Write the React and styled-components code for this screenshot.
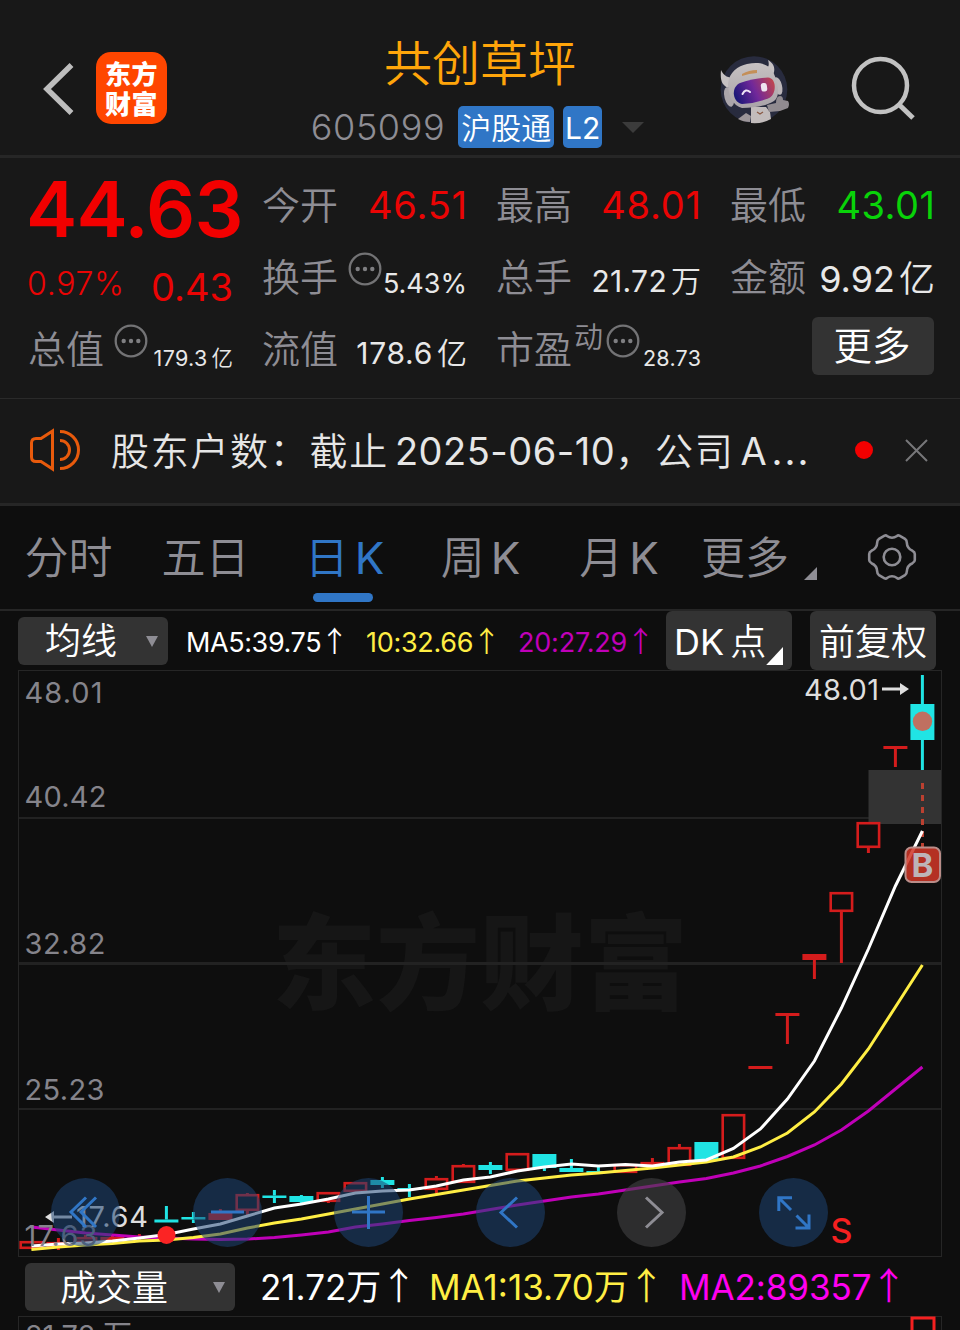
import styled, { createGlobalStyle } from "styled-components";

const GlobalStyle = createGlobalStyle`
  * {
    box-sizing: border-box;
  }
  body {
    margin: 0;
    background: #0e0e0e;
    font-family: Inter, "Noto Sans CJK SC", sans-serif;
    font-weight: 350;
    line-height: 1;
    color: #e6e6e6;
  }
`;

const Screen = styled.div`
  width: 960px;
  height: 1330px;
  overflow: hidden;
  display: flex;
  flex-direction: column;
  white-space: nowrap;
`;

/* header */

const Header = styled.header`
  display: grid;
  grid-template-columns: 300px 360px 300px;
  height: 158px;
  flex: none;
  background: #181818;
  border-bottom: 3px solid #262626;
`;

const HeaderLeft = styled.div`
  display: flex;
  align-items: flex-start;
  padding: 52px 0 0 42px;
  gap: 22px;
`;

const AppLogo = styled.div`
  display: grid;
  grid-template-columns: 26.5px 26.5px;
  grid-auto-rows: 30px;
  place-content: center;
  width: 71px;
  height: 72px;
  border-radius: 15px;
  background: #ff4600;
  color: #fff;
  font-size: 26px;
  font-weight: 900;
  line-height: 33px;
`;

const HeaderCenter = styled.div`
  display: flex;
  flex-direction: column;
  align-items: center;
`;

const StockName = styled.h1`
  margin: 36px 0 0;
  height: 70px;
  font-size: 48px;
  font-weight: 350;
  line-height: 56px;
  color: #ffa50a;
`;

const CodeRow = styled.div`
  display: flex;
  align-items: center;
  height: 42px;
  padding-right: 5px;
  gap: 9px;
`;

const Code = styled.span`
  margin-right: 4px;
  font-size: 36px;
  letter-spacing: 0.6px;
  color: #8e8d94;
`;

const Badge = styled.span`
  display: flex;
  align-items: center;
  justify-content: center;
  width: ${(p) => p.$width}px;
  height: 42px;
  padding-top: 1px;
  border-radius: 5px;
  background: #3076c6;
  color: #fff;
  font-size: 30px;
  font-weight: ${(p) => p.$weight || 350};
`;

const Caret = styled.span`
  width: 0;
  height: 0;
  margin-left: ${(p) => p.$gap || 0}px;
  border: solid transparent;
  border-width: ${(p) => p.$h}px ${(p) => p.$w / 2}px 0;
  border-top-color: ${(p) => p.$color};
`;

const HeaderRight = styled.div`
  display: flex;
  align-items: flex-start;
  padding: 52px 0 0 58px;
  gap: 58px;
`;

/* quote */

const Quote = styled.section`
  display: grid;
  grid-template-columns: repeat(4, 205px);
  grid-template-rows: repeat(3, 72px);
  column-gap: 29px;
  height: 241px;
  flex: none;
  padding: 10px 0 0 28px;
  background: #181818;
  border-bottom: 1px solid #2a2a2a;
`;

const Cell = styled.div`
  display: flex;
  align-items: center;
  height: 72px;
`;

const Price = styled.strong`
  margin-left: -2px;
  padding-top: 11px;
  font-size: 77px;
  font-weight: 600;
  letter-spacing: -0.8px;
  color: #f20000;
`;

const Label = styled.span`
  padding-top: 2px;
  font-size: 38px;
  color: #8e8d94;
`;

const tones = { up: "#ea0404", down: "#09d309", flat: "#e8e8e8" };

const Value = styled.span`
  display: flex;
  margin-left: ${(p) => (p.$lead ? "-1px" : "auto")};
  margin-right: ${(p) => -(p.$track || 0)}px;
  padding-top: ${(p) => p.$drop || 0}px;
  font-size: ${(p) => p.$size}px;
  font-weight: ${(p) => p.$weight || 400};
  letter-spacing: ${(p) => p.$track || 0}px;
  color: ${(p) => tones[p.$tone || "flat"]};
`;

const Unit = styled.span`
  margin-left: 4px;
  font-weight: 350;
`;

const Dynamic = styled.sup`
  align-self: flex-start;
  padding-top: 8px;
  margin: 0 3px 0 2px;
  font-size: 29px;
  line-height: 36px;
  color: #8e8d94;
`;

const MoreButton = styled.button`
  width: 122px;
  height: 58px;
  margin: -4px 1px 0 auto;
  padding: 0 2px 0 0;
  border: 0;
  border-radius: 6px;
  background: #333;
  color: #fff;
  font: inherit;
  font-size: 38.5px;
`;

/* notice */

const Notice = styled.section`
  display: flex;
  align-items: center;
  height: 107px;
  flex: none;
  padding: 0 31px 2px 29px;
  background: #181818;
  border-bottom: 3px solid #262626;
`;

const NoticeText = styled.p`
  display: flex;
  flex: 1;
  margin: 1px 0 0 31px;
  font-size: 38px;
  letter-spacing: 1.7px;
`;

const NoticePart = styled.span`
  margin-left: ${(p) => p.$gap || 0}px;
  font-weight: 400;
  letter-spacing: ${(p) => p.$track}px;
`;

const RedDot = styled.i`
  width: 18px;
  height: 18px;
  margin-right: 31px;
  border-radius: 50%;
  background: #f20000;
`;

/* tabs */

const Tabs = styled.nav`
  display: grid;
  grid-template-columns: repeat(5, 137px) 1fr 136px;
  height: 105px;
  flex: none;
  border-bottom: 2px solid #262626;
`;

const Tab = styled.div`
  display: flex;
  flex-direction: column;
  align-items: center;
  padding-top: 21px;
  font-size: 44px;
  line-height: 62px;
  color: ${(p) => (p.$active ? "#3076c6" : "#8e8d94")};

  &::after {
    content: "";
    width: 60px;
    height: 9px;
    margin-top: 4px;
    border-radius: 5px;
    background: ${(p) => (p.$active ? "#3076c6" : "transparent")};
  }
`;

const TabText = styled.span`
  display: flex;
  gap: 6px;
  padding-left: ${(p) => p.$shift || 0}px;
`;

const Latin = styled.span`
  font-weight: 400;
`;

const MoreTab = styled.div`
  display: flex;
  padding: 21px 0 0 16px;
  font-size: 44px;
  line-height: 62px;
  color: #8e8d94;
`;

const Corner = styled.i`
  width: ${(p) => p.$size}px;
  height: ${(p) => p.$size}px;
  background: ${(p) => p.$color};
  clip-path: polygon(100% 0, 100% 100%, 0 100%);
  ${(p) => (p.$inset ? "align-self: flex-end; margin: 0 9px 5px 0;" : "margin: 40px 0 0 15px;")}
`;

const GearCell = styled.div`
  padding: 26px 0 0 41px;
`;

/* indicator rows */

const IndicatorRow = styled.div`
  display: flex;
  align-items: center;
  height: ${(p) => p.$height}px;
  flex: none;
  padding-left: ${(p) => p.$left}px;
`;

const Picker = styled.div`
  display: flex;
  align-items: center;
  justify-content: flex-end;
  width: ${(p) => p.$width}px;
  height: 48px;
  padding: 1px 10px 0 0;
  border-radius: 6px;
  background: #333;
  color: #fff;
  font-size: 36px;
`;

const ReadingBox = styled.span`
  display: flex;
  align-items: center;
  width: ${(p) => p.$width}px;
  margin-left: ${(p) => p.$gap || 0}px;
  padding-top: ${(p) => p.$drop || 0}px;
  font-size: ${(p) => p.$size}px;
  font-weight: 400;
  letter-spacing: ${(p) => p.$track || 0}px;
  color: ${(p) => p.$color};
`;

const Arrow = styled.span`
  margin: -0.12em 0 0 -0.03em;
  font-family: "Noto Sans CJK SC", sans-serif;
  font-size: 1.06em;
  font-weight: 350;
`;

function Reading({ text, ...box }) {
  return (
    <ReadingBox {...box}>
      {text}
      <Arrow>↑</Arrow>
    </ReadingBox>
  );
}

const Chip = styled.div`
  display: flex;
  align-items: center;
  justify-content: ${(p) => (p.$corner ? "space-between" : "center")};
  width: 126px;
  height: 59px;
  margin-right: 18px;
  padding: 2px 0 0 ${(p) => (p.$corner ? 8 : 0)}px;
  border-radius: 6px;
  background: #333;
  color: #fff;
  font-size: 36px;
`;

/* chart */

const ChartArea = styled.div`
  position: relative;
  height: 588px;
  flex: none;

  svg {
    display: block;
  }
`;

const Controls = styled.div`
  position: absolute;
  top: 508px;
  left: 51px;
  display: flex;
  gap: 72.6px;
`;

const RoundButton = styled.div`
  display: flex;
  width: 69px;
  height: 69px;
  border-radius: 50%;
  background: ${(p) => (p.$muted ? "rgba(64, 64, 66, .62)" : "rgba(30, 68, 114, .55)")};
`;

const red = "#d41c1c";
const cyan = "#20e4e4";

// [direction, bodyTop, bodyBottom, high, low], oldest first, 27px apart
const candles = [
  ["up", 1241, 1249, 1241, 1249],
  ["up", 1242, 1247, 1238, 1250],
  ["up", 1237, 1243, 1235, 1243],
  ["up", 1237, 1240, 1236, 1240],
  ["up", 1236, 1239, 1234, 1240],
  ["down", 1219.5, 1222.5, 1206, 1222],
  ["down", 1217, 1219.5, 1212, 1223],
  ["full", 1213, 1220, 1209, 1220],
  ["up", 1194, 1211, 1193, 1217],
  ["down", 1195.5, 1198, 1190, 1203],
  ["down", 1196, 1202, 1195, 1205],
  ["up", 1192, 1202, 1192, 1203],
  ["up", 1182, 1192, 1182, 1192],
  ["down", 1180, 1185, 1177, 1188],
  ["down", 1188, 1190, 1184, 1197],
  ["up", 1178, 1190, 1176, 1193],
  ["up", 1165, 1183, 1164, 1183],
  ["down", 1165, 1170, 1162, 1174],
  ["up", 1153, 1171, 1153, 1171],
  ["down", 1154, 1168, 1154, 1171],
  ["down", 1168, 1172, 1159, 1172],
  ["down", 1171, 1173, 1165, 1173],
  ["up", 1164, 1173, 1164, 1173],
  ["up", 1162, 1167, 1158, 1167],
  ["up", 1147, 1166, 1144, 1166],
  ["down", 1142, 1160, 1142, 1160],
  ["up", 1114, 1159, 1114, 1159],
  ["full", 1066, 1069, 1066, 1069],
  ["full", 1013, 1016, 1013, 1044],
  ["full", 954, 960, 954, 979],
  ["up", 892, 912, 892, 963],
  ["up", 822, 848, 822, 853],
  ["full", 746, 749, 746, 767],
  ["down", 704, 740, 675, 770],
];

const averages = [
  {
    color: "#c000b8",
    ys: [
      1227, 1230, 1233, 1235, 1237, 1238, 1239, 1239.5, 1239, 1237.5, 1235, 1232, 1227, 1224, 1220.5,
      1217.5, 1214, 1209.5, 1205, 1201, 1197, 1194, 1190, 1186, 1182, 1178.5, 1173, 1166, 1156.5,
      1145, 1130, 1111, 1089, 1067,
    ],
  },
  {
    color: "#ffee44",
    ys: [
      1249.5, 1247, 1245, 1243.5, 1241, 1240, 1237.5, 1234, 1228, 1223, 1219, 1214, 1209, 1204, 1199,
      1194.5, 1190, 1185.5, 1181, 1178, 1175, 1173, 1170.5, 1168, 1165, 1162, 1157, 1147, 1133, 1112,
      1084, 1049, 1007, 965,
    ],
  },
  {
    color: "#fff",
    ys: [
      1246, 1244, 1243, 1241, 1238, 1234.5, 1229, 1224, 1216, 1208, 1204, 1199, 1193, 1191, 1190,
      1186, 1180, 1177, 1171, 1167, 1164, 1166, 1164.5, 1166, 1162, 1160, 1148.5, 1129, 1099, 1061,
      1008, 949, 886, 831,
    ],
  },
];

const axis = [
  ["48.01", 703, 78],
  ["40.42", 807, 82],
  ["32.82", 954, 81],
  ["25.23", 1100, 80],
  ["17.63", 1246, 73],
];

const xAt = (i) => 31.4 + i * 27;

function Candle({ index, data }) {
  const [kind, top, bottom, high, low] = data;
  const x = xAt(index);
  const color = kind === "down" ? cyan : red;
  return (
    <g stroke={color} strokeWidth="3" fill={color}>
      {high < top && <line x1={x} x2={x} y1={high} y2={top} />}
      {low > bottom && <line x1={x} x2={x} y1={bottom} y2={low} />}
      {kind === "up" ? (
        <rect x={x - 10.7} y={top + 1.2} width="21.4" height={bottom - top - 2.4} fill="none" strokeWidth="2.6" />
      ) : (
        <rect x={x - 12} y={top} width="24" height={bottom - top} stroke="none" />
      )}
    </g>
  );
}

function KLineChart() {
  return (
    <svg width="960" height="588" viewBox="0 670 960 588">
      <text x="272" y="1002" fontSize="104" fontWeight="900" fill="#161616" textLength="416">
        东方财富
      </text>
      <rect x="18.5" y="670.5" width="923" height="586" fill="none" stroke="#262626" />
      <g stroke="#222" strokeWidth="2">
        <line x1="19" x2="941" y1="818" y2="818" />
        <line x1="19" x2="941" y1="963.5" y2="963.5" strokeWidth="3" />
        <line x1="19" x2="941" y1="1109" y2="1109" />
      </g>
      <rect x="868.5" y="770" width="72.5" height="54" fill="#333" />
      {candles.map((c, i) => (
        <Candle key={i} index={i} data={c} />
      ))}
      <line x1="922.5" x2="922.5" y1="783" y2="847" stroke="#bb4030" strokeWidth="3" strokeDasharray="6 6" />
      <circle cx="922.5" cy="721.3" r="9.7" fill="#c07060" />
      {averages.map((line) => (
        <polyline
          key={line.color}
          points={line.ys.map((y, i) => `${xAt(i)},${y}`).join(" ")}
          fill="none"
          stroke={line.color}
          strokeWidth="3"
        />
      ))}
      <rect x="905.5" y="847.5" width="34.5" height="34.5" rx="6" fill="#cf3526" fillOpacity="0.86" stroke="#b98d89" strokeWidth="2" />
      <text x="922.5" y="876.5" fontSize="33" fontWeight="700" textAnchor="middle" fill="#bdb4b8">
        B
      </text>
      <circle cx="166.5" cy="1235" r="9" fill="#fb2424" />
      <g fontSize="29" fontWeight="400" fill="#85848b">
        {axis.map(([text, y, width]) => (
          <text key={text} x="24.5" y={y} textLength={width}>
            {text}
          </text>
        ))}
      </g>
      <g fill="#dedede" fontSize="29" fontWeight="400">
        <text x="804" y="699.5" textLength="75">48.01</text>
        <path d="M882 687.5h18v-4.5l9 6-9 6v-4.5h-18z" />
        <text x="76" y="1227" textLength="72">17.64</text>
        <path d="M72 1215.5h-18v-4.5l-9 6 9 6v-4.5h18z" />
      </g>
      <text x="830.5" y="1242.5" fontSize="34" fontWeight="500" fill="#f52020">
        S
      </text>
    </svg>
  );
}

const controls = [
  "M35 19.5 20 34 35 49M45 19.5 30 34 45 49",
  "M18 34h33",
  "M18 34h33M34.5 18v33",
  "M41 19.5 25 34.5 41 49.5",
  "M29 19.5 45 34.5 29 49.5",
  "M19.8 33V19.8H33M20 20 32 32M50 36.5V50H36.5M49.5 49.5 37.5 37.5",
];

const VolumeArea = styled.div`
  height: 16px;
  overflow: hidden;
  margin-top: -1px;
`;

const DotsIcon = styled.svg`
  flex: none;
  align-self: flex-start;
  margin-top: 12px;
`;

function Dots() {
  return (
    <DotsIcon width="34" height="34" viewBox="0 0 34 34">
      <circle cx="17" cy="17" r="15.3" fill="none" stroke="#737375" strokeWidth="2.3" />
      <g fill="#7f7f82">
        <circle cx="9.7" cy="17" r="2.2" />
        <circle cx="17" cy="17" r="2.2" />
        <circle cx="24.3" cy="17" r="2.2" />
      </g>
    </DotsIcon>
  );
}

const Spacer = styled.span`
  width: ${(p) => p.$w}px;
  flex: none;
`;

function Robot() {
  return (
    <svg width="72" height="72" viewBox="718 52 72 72">
      <defs>
        <linearGradient id="visor" x1="0" x2="1" y1="0.6" y2="0.3">
          <stop offset="0" stopColor="#1c1778" />
          <stop offset="0.5" stopColor="#71289a" />
          <stop offset="1" stopColor="#bd4451" />
        </linearGradient>
        <linearGradient id="shell" x1="0" x2="0" y1="0" y2="1">
          <stop offset="0" stopColor="#c6c1c2" />
          <stop offset="1" stopColor="#a9a3a8" />
        </linearGradient>
      </defs>
      <circle cx="754" cy="89.5" r="33.3" fill="#282b3e" />
      <path d="M751 107h15l4 5 1 7q-9 5-20 4z" fill="#c2bcbc" />
      <path d="M738 119l8-6 5 3-1 6q-7 0-12-3z" fill="#9c9599" />
      <path d="M757 112l3 2 3-2" stroke="#8a5a45" strokeWidth="1.3" fill="none" />
      <path d="M767 105l9-2q0-7 4-7 3 0 3 4l5 1q2 3 0 7l-8 3-11 1z" fill="#918b90" />
      <path d="M721 70c-1 11 1 15 7 18l9-11c-9 2-13-1-16-7zM768 60c2 6 0 9-6 10l10 7c5-9 1-14-4-17z" fill="#c6c1c2" />
      <ellipse cx="729" cy="97" rx="4.5" ry="10" transform="rotate(-15 729 97)" fill="#aaa5aa" />
      <ellipse cx="778" cy="86" rx="4" ry="9" transform="rotate(-15 778 86)" fill="#bcb6b9" />
      <path d="M728 84c1-12 10-18 19-20 15-3 23 1 27 10 5 11 6 23 0 27-8 5-20 7-32 7-9-2-14-13-14-24z" fill="url(#shell)" />
      <path d="M742 74q7-4 15-4v3q-8 .3-15 3z" fill="#c48f58" />
      <path d="M740 83Q755 78 768 77.5C777 78 777 95 768 98.5Q755 103.5 742 104C732 102 731 87 740 83z" fill="url(#visor)" />
      <path d="M742.5 94q3-6 7.5-2" fill="none" stroke="#eee4f6" strokeWidth="2" strokeLinecap="round" />
      <rect x="761" y="83" width="6" height="8.5" rx="2.5" fill="#eee4ef" transform="rotate(-8 764 87)" />
    </svg>
  );
}

export default function App() {
  return (
    <Screen>
      <GlobalStyle />
      <Header>
        <HeaderLeft>
          <svg width="32" height="72" viewBox="0 0 32 72">
            <path d="M29.5 13 5 37 29.5 61" fill="none" stroke="#bdbdbd" strokeWidth="5.5" />
          </svg>
          <AppLogo>
            <span>东</span>
            <span>方</span>
            <span>财</span>
            <span>富</span>
          </AppLogo>
        </HeaderLeft>
        <HeaderCenter>
          <StockName>共创草坪</StockName>
          <CodeRow>
            <Code>605099</Code>
            <Badge $width={96}>沪股通</Badge>
            <Badge $width={39} $weight={400}>L2</Badge>
            <Caret $w={22} $h={11} $gap={11} $color="#3b3b3b" />
          </CodeRow>
        </HeaderCenter>
        <HeaderRight>
          <Robot />
          <svg width="72" height="72" viewBox="848 52 72 72" fill="none" stroke="#c2c2c2" strokeWidth="4.5">
            <circle cx="880.5" cy="85.5" r="26.5" />
            <path d="M899 104.5 913 118" strokeWidth="5" />
          </svg>
        </HeaderRight>
      </Header>

      <Quote>
        <Cell>
          <Price>44.63</Price>
        </Cell>
        <Cell>
          <Label>今开</Label>
          <Value $size={38} $track={0.8} $drop={1} $tone="up">46.51</Value>
        </Cell>
        <Cell>
          <Label>最高</Label>
          <Value $size={38} $track={0.8} $drop={1} $tone="up">48.01</Value>
        </Cell>
        <Cell>
          <Label>最低</Label>
          <Value $size={38} $track={0.5} $drop={1} $tone="down">43.01</Value>
        </Cell>

        <Cell>
          <Value $lead $size={32} $track={0.7} $drop={15} $weight={350} $tone="up">0.97%</Value>
          <Value $size={38} $drop={22} $tone="up">0.43</Value>
        </Cell>
        <Cell>
          <Label>换手</Label>
          <Spacer $w={10} />
          <Dots />
          <Value $size={27} $drop={15}>5.43%</Value>
        </Cell>
        <Cell>
          <Label>总手</Label>
          <Value $size={30} $track={0.3} $drop={10}>21.72<Unit>万</Unit></Value>
        </Cell>
        <Cell>
          <Label>金额</Label>
          <Value $size={36} $drop={5}>9.92<Unit>亿</Unit></Value>
        </Cell>

        <Cell>
          <Label>总值</Label>
          <Spacer $w={10} />
          <Dots />
          <Value $size={21.5} $track={0.3} $drop={21}>179.3<Unit>亿</Unit></Value>
        </Cell>
        <Cell>
          <Label>流值</Label>
          <Value $size={30} $track={0.7} $drop={10}>178.6<Unit>亿</Unit></Value>
        </Cell>
        <Cell>
          <Label>市盈</Label>
          <Dynamic>动</Dynamic>
          <Dots />
          <Value $size={21.5} $track={0.3} $drop={21}>28.73</Value>
        </Cell>
        <Cell>
          <MoreButton>更多</MoreButton>
        </Cell>
      </Quote>

      <Notice>
        <svg width="51" height="44" viewBox="0 0 51 44" fill="none" stroke="#e85a0c" strokeWidth="3">
          <path d="M23.5 3v38L12 33.5H7q-4.5 0-4.5-4.5V15q0-4.5 4.5-4.5h5z" />
          <path d="M31 3.5a18.5 18.5 0 0 1 0 37M31 12.5a9.5 9.5 0 0 1 0 19" />
        </svg>
        <NoticeText>
          股东户数：截止
          <NoticePart $gap={6} $track={0.5}>2025-06-10</NoticePart>
          ，公司
          <NoticePart $gap={6} $track={0}>A</NoticePart>
          <NoticePart $gap={5} $track={2}>...</NoticePart>
        </NoticeText>
        <RedDot />
        <svg width="25" height="25" viewBox="0 0 25 25" stroke="#77777a" strokeWidth="2">
          <path d="M2 2 23 23M23 2 2 23" />
        </svg>
      </Notice>

      <Tabs>
        <Tab>分时</Tab>
        <Tab>五日</Tab>
        <Tab $active><TabText $shift={4}>日<Latin>K</Latin></TabText></Tab>
        <Tab><TabText $shift={2}>周<Latin>K</Latin></TabText></Tab>
        <Tab><TabText $shift={5}>月<Latin>K</Latin></TabText></Tab>
        <MoreTab>
          更多
          <Corner $size={13} $color="#8e8d94" />
        </MoreTab>
        <GearCell>
          <svg width="54" height="50" viewBox="0 0 54 50" fill="none" stroke="#8e8d94" strokeWidth="2.6">
            <path d="M19.5 3.6Q21 3 22 4Q27 7.5 32 4Q33 3 34.5 3.6L40 6.8Q41.8 8 41.8 10.5Q42 16.5 47.5 18.8Q49.8 20 49.8 22V28Q49.8 30 47.5 31.2Q42 33.5 41.8 39.5Q41.8 42 40 43.2L34.5 46.4Q33 47 32 46Q27 42.5 22 46Q21 47 19.5 46.4L14 43.2Q12.2 42 12.2 39.5Q12 33.5 6.5 31.2Q4.2 30 4.2 28V22Q4.2 20 6.5 18.8Q12 16.5 12.2 10.5Q12.2 8 14 6.8Z" />
            <circle cx="27" cy="25" r="8.3" />
          </svg>
        </GearCell>
      </Tabs>

      <IndicatorRow $height={59} $left={18}>
        <Picker $width={150}>
          均线
          <Caret $w={13} $h={11} $gap={29} $color="#8e8d94" />
        </Picker>
        <Reading text="MA5:39.75" $gap={18} $width={180} $size={27} $drop={3} $track={-0.4} $color="#fff" />
        <Reading text="10:32.66" $width={152} $size={27} $drop={3} $track={-0.3} $color="#ffee44" />
        <Reading text="20:27.29" $width={148} $size={27} $drop={3} $track={-0.2} $color="#c000b8" />
        <Chip $corner>
          <TabText><Latin>DK</Latin><span>点</span></TabText>
          <Corner $size={18} $inset $color="#fff" />
        </Chip>
        <Chip>前复权</Chip>
      </IndicatorRow>

      <ChartArea>
        <KLineChart />
        <Controls>
          {controls.map((d, i) => (
            <RoundButton key={d} $muted={i === 4}>
              <svg width="69" height="69" viewBox="0 0 69 69" fill="none" stroke={i === 4 ? "#8e8d94" : "#3076c6"} strokeWidth="3">
                <path d={d} />
              </svg>
            </RoundButton>
          ))}
        </Controls>
      </ChartArea>

      <IndicatorRow $height={58} $left={25}>
        <Picker $width={210}>
          成交量
          <Caret $w={13} $h={11} $gap={45} $color="#8e8d94" />
        </Picker>
        <Reading text="21.72万" $gap={25} $width={169} $size={35} $color="#fff" />
        <Reading text="MA1:13.70万" $width={250} $size={35} $color="#ffee44" />
        <Reading text="MA2:89357" $width={240} $size={35} $track={-0.1} $color="#ff00f0" />
      </IndicatorRow>

      <VolumeArea>
        <svg width="960" height="16" viewBox="0 1314 960 16">
          <rect x="18.5" y="1315.5" width="923" height="60" fill="none" stroke="#262626" />
          <rect x="912" y="1317" width="22" height="60" fill="none" stroke="#f52020" strokeWidth="3" />
          <text x="25" y="1345" fontSize="29" fontWeight="400" fill="#85848b" textLength="107">21.72 万</text>
        </svg>
      </VolumeArea>
    </Screen>
  );
}
